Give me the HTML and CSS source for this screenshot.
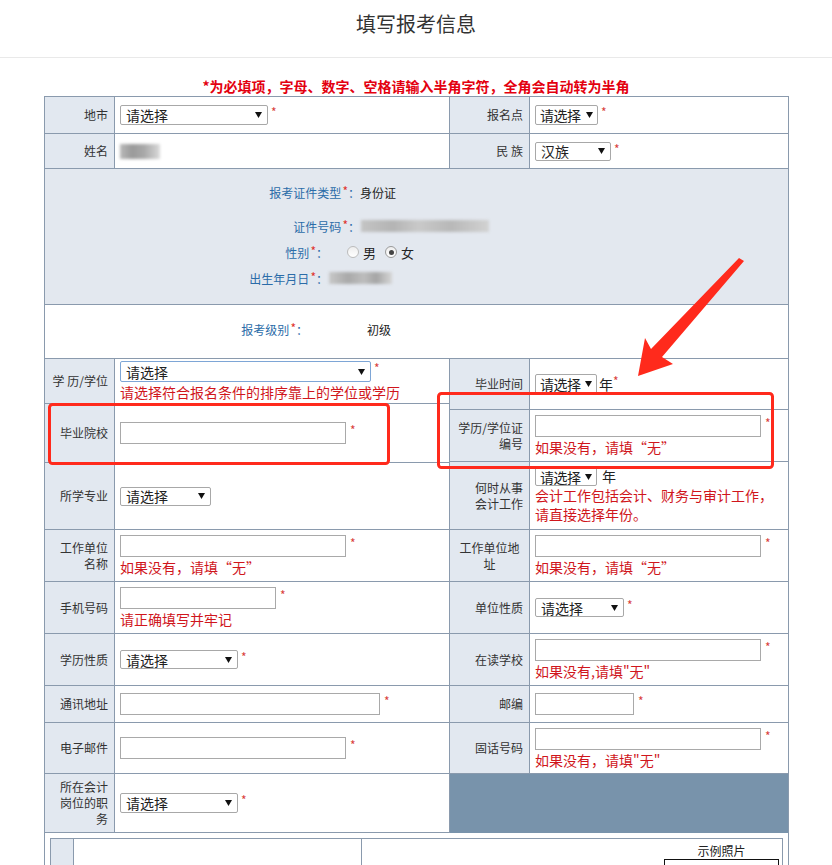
FILE: index.html
```html
<!DOCTYPE html>
<html lang="zh-CN">
<head>
<meta charset="utf-8">
<title>填写报考信息</title>
<link rel="stylesheet" href="styles.css">
</head>
<body>
<div class="page">
  <header class="top"><h1>填写报考信息</h1></header>
  <p class="notice">*为必填项，字母、数字、空格请输入半角字符，全角会自动转为半角</p>

  <div class="form">
    <div class="row row4 h37">
      <div class="lbl">地市</div>
      <div class="val div">
        <div class="fld"><div class="sel w148"><span>请选择</span><svg class="arr" viewBox="0 0 7 6"><path d="M0 0H7L3.5 6Z"/></svg></div><span class="req">*</span></div>
      </div>
      <div class="lbl">报名点</div>
      <div class="val">
        <div class="fld"><div class="sel w63 tight"><span>请选择</span><svg class="arr" viewBox="0 0 7 6"><path d="M0 0H7L3.5 6Z"/></svg></div><span class="req">*</span></div>
      </div>
    </div>
    <div class="row row4 h35">
      <div class="lbl">姓名</div>
      <div class="val div"><span class="blur b-name"></span></div>
      <div class="lbl">民 族</div>
      <div class="val">
        <div class="fld"><div class="sel w76 h19"><span>汉族</span><svg class="arr" viewBox="0 0 7 6"><path d="M0 0H7L3.5 6Z"/></svg></div><span class="req">*</span></div>
      </div>
    </div>

    <div class="ident">
      <div class="irow"><span class="ik wa">报考证件类型<span class="ireq">*</span>：</span><span class="iv">身份证</span></div>
      <div class="irow mt14"><span class="ik wa">证件号码<span class="ireq">*</span>：</span><span class="blur b-id"></span></div>
      <div class="irow mt6"><span class="ik wc">性别<span class="ireq">*</span>：</span>
        <span class="radios"><span class="radio"></span><span class="rtxt">男</span><span class="radio on"></span><span class="rtxt">女</span></span>
      </div>
      <div class="irow mt6"><span class="ik wc">出生年月日<span class="ireq">*</span>：</span><span class="blur b-birth"></span></div>
    </div>

    <div class="level">
      <span class="ik wl">报考级别<span class="ireq">*</span>：</span><span class="iv lv">初级</span>
    </div>

    <div class="cols">
      <div class="col colL">
        <div class="row rowL h45">
          <div class="lbl">学 历/学位</div>
          <div class="val">
            <div class="fld"><div class="sel w251 h21 focus"><span>请选择</span><svg class="arr" viewBox="0 0 7 6"><path d="M0 0H7L3.5 6Z"/></svg></div><span class="req">*</span></div>
            <div class="hint">请选择符合报名条件的排序靠上的学位或学历</div>
          </div>
        </div>
        <div class="row rowL h59">
          <div class="lbl">毕业院校</div>
          <div class="val"><div class="fld"><input class="inp w226" type="text"><span class="req ri">*</span></div></div>
        </div>
        <div class="row rowL h67">
          <div class="lbl">所学专业</div>
          <div class="val"><div class="fld"><div class="sel w91 h19"><span>请选择</span><svg class="arr" viewBox="0 0 7 6"><path d="M0 0H7L3.5 6Z"/></svg></div></div></div>
        </div>
        <div class="row rowL h52">
          <div class="lbl">工作单位<br>名称</div>
          <div class="val">
            <div class="fld"><input class="inp w226" type="text"><span class="req ri">*</span></div>
            <div class="hint">如果没有，请填“无”</div>
          </div>
        </div>
        <div class="row rowL h52">
          <div class="lbl">手机号码</div>
          <div class="val">
            <div class="fld"><input class="inp w156" type="text"><span class="req ri">*</span></div>
            <div class="hint">请正确填写并牢记</div>
          </div>
        </div>
        <div class="row rowL h52">
          <div class="lbl">学历性质</div>
          <div class="val"><div class="fld"><div class="sel w118 h19"><span>请选择</span><svg class="arr" viewBox="0 0 7 6"><path d="M0 0H7L3.5 6Z"/></svg></div><span class="req">*</span></div></div>
        </div>
        <div class="row rowL h37">
          <div class="lbl">通讯地址</div>
          <div class="val"><div class="fld"><input class="inp w260" type="text"><span class="req ri">*</span></div></div>
        </div>
        <div class="row rowL h51">
          <div class="lbl">电子邮件</div>
          <div class="val"><div class="fld"><input class="inp w226" type="text"><span class="req ri">*</span></div></div>
        </div>
        <div class="row rowL h59">
          <div class="lbl">所在会计<br>岗位的职<br>务</div>
          <div class="val"><div class="fld"><div class="sel w118"><span>请选择</span><svg class="arr" viewBox="0 0 7 6"><path d="M0 0H7L3.5 6Z"/></svg></div><span class="req">*</span></div></div>
        </div>
      </div>

      <div class="col colR">
        <div class="row rowR h51">
          <div class="lbl">毕业时间</div>
          <div class="val"><div class="fld"><div class="sel w62 h21 tight"><span>请选择</span><svg class="arr" viewBox="0 0 7 6"><path d="M0 0H7L3.5 6Z"/></svg></div><span class="unit">年</span><span class="req rt">*</span></div></div>
        </div>
        <div class="row rowR h52">
          <div class="lbl">学历/学位证<br>编号</div>
          <div class="val">
            <div class="fld"><input class="inp w226" type="text"><span class="req ri">*</span></div>
            <div class="hint">如果没有，请填“无”</div>
          </div>
        </div>
        <div class="row rowR h68">
          <div class="lbl">何时从事<br>会计工作</div>
          <div class="val">
            <div class="fld"><div class="sel w62 h19 tight"><span>请选择</span><svg class="arr" viewBox="0 0 7 6"><path d="M0 0H7L3.5 6Z"/></svg></div><span class="unit sp">年</span></div>
            <div class="hint two">会计工作包括会计、财务与审计工作，<br>请直接选择年份。</div>
          </div>
        </div>
        <div class="row rowR h52">
          <div class="lbl ctr">工作单位地<br>址</div>
          <div class="val">
            <div class="fld"><input class="inp w226" type="text"><span class="req ri">*</span></div>
            <div class="hint">如果没有，请填“无”</div>
          </div>
        </div>
        <div class="row rowR h52">
          <div class="lbl">单位性质</div>
          <div class="val"><div class="fld"><div class="sel w89 h19"><span>请选择</span><svg class="arr" viewBox="0 0 7 6"><path d="M0 0H7L3.5 6Z"/></svg></div><span class="req">*</span></div></div>
        </div>
        <div class="row rowR h52">
          <div class="lbl">在读学校</div>
          <div class="val">
            <div class="fld"><input class="inp w226" type="text"><span class="req ri">*</span></div>
            <div class="hint">如果没有,请填"无"</div>
          </div>
        </div>
        <div class="row rowR h37">
          <div class="lbl">邮编</div>
          <div class="val"><div class="fld"><input class="inp w99" type="text"><span class="req ri">*</span></div></div>
        </div>
        <div class="row rowR h51">
          <div class="lbl">固话号码</div>
          <div class="val">
            <div class="fld"><input class="inp w226" type="text"><span class="req ri">*</span></div>
            <div class="hint">如果没有，请填"无"</div>
          </div>
        </div>
        <div class="row dark h59"></div>
      </div>
    </div>

    <div class="sub">
      <div class="sub-a"></div>
      <div class="sub-b"></div>
      <div class="sub-c">
        <div class="photo">
          <div class="photo-t">示例照片</div>
          <div class="photo-box"></div>
        </div>
      </div>
    </div>
  </div>

  <svg class="annot" width="832" height="865" viewBox="0 0 832 865">
    <rect x="49.5" y="404.5" width="339" height="59" rx="3" fill="none" stroke="#ff2a1c" stroke-width="3"/>
    <rect x="438.5" y="393.5" width="334" height="74" rx="3" fill="none" stroke="#ff2a1c" stroke-width="3"/>
    <polygon points="739,258 744,261 662,357 673,364 638,376 645,338 651,349" fill="#ff2a1c"/>
  </svg>
</div>
</body>
</html>
```

FILE: styles.css
```css
html, body {
  margin: 0;
  padding: 0;
  background: #fff;
}
body {
  font-family: "Noto Sans CJK SC", "Noto Sans", "Liberation Sans", sans-serif;
  font-size: 12px;
  color: #333;
  overflow: hidden;
}
* { box-sizing: border-box; }

.page {
  position: relative;
  width: 832px;
  height: 865px;
  overflow: hidden;
}

.top {
  height: 58px;
  border-bottom: 1px solid #e9e9e9;
  text-align: center;
}
.top h1 {
  margin: 0;
  padding-top: 10px;
  font-size: 20px;
  line-height: 28px;
  font-weight: normal;
  color: #333;
}

.notice {
  margin: 18px 0 0;
  text-align: center;
  color: #e3000f;
  font-weight: bold;
  font-size: 14px;
  line-height: 20px;
}

.form {
  margin-left: 44px;
  width: 745px;
  border: 1px solid #8a9aad;
  border-bottom: none;
  padding-bottom: 40px;
}

.row {
  display: grid;
  border-bottom: 1px solid #8a9aad;
}
.row4 { grid-template-columns: 70px 335px 80px 1fr; }
.rowL { grid-template-columns: 70px 1fr; }
.rowR { grid-template-columns: 80px 1fr; }

.h35 { height: 35px; }
.h37 { height: 37px; }
.h45 { height: 45px; }
.h51 { height: 51px; }
.h52 { height: 52px; }
.h59 { height: 59px; }
.h67 { height: 67px; }
.h68 { height: 68px; }

.lbl {
  background: #e2e8f0;
  border-right: 1px solid #8a9aad;
  display: flex;
  align-items: center;
  justify-content: flex-end;
  text-align: right;
  padding: 0 6px;
  line-height: 16px;
  white-space: nowrap;
  color: #333;
}
.lbl.ctr {
  justify-content: center;
  text-align: center;
}

.val {
  display: flex;
  flex-direction: column;
  justify-content: center;
  align-items: flex-start;
  padding-left: 5px;
}
.val.div { border-right: 1px solid #8a9aad; }

.fld {
  display: flex;
  align-items: flex-start;
}

.sel {
  display: flex;
  align-items: center;
  justify-content: space-between;
  height: 20px;
  border: 1px solid #a8a8a8;
  border-radius: 2px;
  background: #fff;
  padding: 0 5px;
  font-size: 14px;
  line-height: 18px;
  color: #222;
}
.sel.tight { padding: 0 4px; }
.sel.tight span { letter-spacing: -0.5px; }
.sel.h19 { height: 19px; }
.sel.h21 { height: 21px; }
.sel.focus { border-color: #7ea6d6; }
.arr {
  width: 7px;
  height: 6px;
  fill: #111;
  flex: none;
}
.w62 { width: 62px; }
.w63 { width: 63px; }
.w76 { width: 76px; }
.w89 { width: 89px; }
.w91 { width: 91px; }
.w118 { width: 118px; }
.w148 { width: 148px; }
.w251 { width: 251px; }

.inp {
  display: block;
  height: 22px;
  margin: 0;
  padding: 0 3px;
  border: 1px solid #a9a9a9;
  background: #fff;
  font: inherit;
  outline: none;
}
.w99 { width: 99px; }
.w156 { width: 156px; }
.w226 { width: 226px; }
.w260 { width: 260px; }

.req {
  color: #d9403a;
  font-size: 12px;
  line-height: 12px;
  margin-left: 3px;
  margin-top: 1px;
}
.req.ri { margin-left: 4px; margin-top: 2px; }
.req.rt { margin-left: 0; }

.unit {
  font-size: 14px;
  line-height: 20px;
  color: #222;
  margin-left: 2px;
}
.unit.sp { margin-left: 5px; line-height: 18px; }

.hint {
  color: #d0161c;
  font-size: 14px;
  line-height: 17px;
  margin-top: 2px;
  white-space: nowrap;
}
.hint.two { line-height: 19px; margin-top: 0; }

/* identity block */
.ident {
  height: 136px;
  background: #e3e8ef;
  border-bottom: 1px solid #8a9aad;
  padding-top: 13px;
}
.irow {
  display: flex;
  align-items: center;
  height: 20px;
}
.mt14 { margin-top: 14px; }
.mt6 { margin-top: 6px; }
.ik {
  text-align: right;
  color: #2b6ca8;
  white-space: nowrap;
}
.ik.wa { width: 315px; }
.ik.wc { width: 283px; }
.ik.wl { width: 263px; }
.ireq {
  color: #e0302c;
  position: relative;
  top: -2px;
  margin-left: 1px;
}
.iv { color: #222; }

.blur {
  display: inline-block;
  height: 12px;
  filter: blur(1.4px);
}
.b-name {
  width: 40px;
  height: 15px;
  background: linear-gradient(90deg, #b9b9b9 0%, #9a9a9a 30%, #a8a8a8 60%, #c6c6c6 85%, #dcdcdc 100%);
}
.b-id {
  width: 128px;
  margin-left: 1px;
  background: linear-gradient(90deg, #c4c4c4 0%, #b4b4b4 25%, #c9c9c9 45%, #b8b8b8 70%, #d2d2d2 100%);
}
.b-birth {
  width: 63px;
  margin-left: 1px;
  background: linear-gradient(90deg, #c8c8c8 0%, #a9a9a9 30%, #bdbdbd 55%, #a5a5a5 75%, #d6d6d6 100%);
}

.radios {
  display: flex;
  align-items: center;
  margin-left: 19px;
  font-size: 13px;
  color: #222;
}
.radio {
  width: 12px;
  height: 12px;
  border-radius: 50%;
  border: 1px solid #bcbcbc;
  background: linear-gradient(#eeeeee, #ffffff);
  display: flex;
  align-items: center;
  justify-content: center;
}
.radio.on { border-color: #9a9a9a; }
.radio.on::after {
  content: "";
  width: 5px;
  height: 5px;
  border-radius: 50%;
  background: #444;
}
.rtxt { margin: 0 9px 0 4px; }

.level {
  height: 54px;
  border-bottom: 1px solid #8a9aad;
  display: flex;
  align-items: center;
  padding-bottom: 5px;
  background: #fff;
}
.iv.lv { margin-left: 59px; }

/* two columns */
.cols {
  display: grid;
  grid-template-columns: 405px 1fr;
}
.colL { border-right: 1px solid #8a9aad; }
.row.dark {
  background: #7893ab;
  border-bottom-color: #7893ab;
}

/* nested bottom table */
.sub {
  margin: 5px;
  border: 1px solid #8a9aad;
  display: grid;
  grid-template-columns: 23px 288px 1fr;
  height: 80px;
}
.sub-a {
  background: #e2e8f0;
  border-right: 1px solid #8a9aad;
}
.sub-b { border-right: 1px solid #8a9aad; }
.sub-c {
  display: flex;
  justify-content: flex-end;
  padding-right: 3px;
}
.photo { width: 115px; }
.photo-t {
  text-align: center;
  font-size: 12px;
  line-height: 14px;
  padding-top: 5px;
  color: #222;
}
.photo-box {
  margin-top: 1px;
  height: 60px;
  border: 1px solid #111;
}

.annot {
  position: absolute;
  left: 0;
  top: 0;
  pointer-events: none;
}
```
